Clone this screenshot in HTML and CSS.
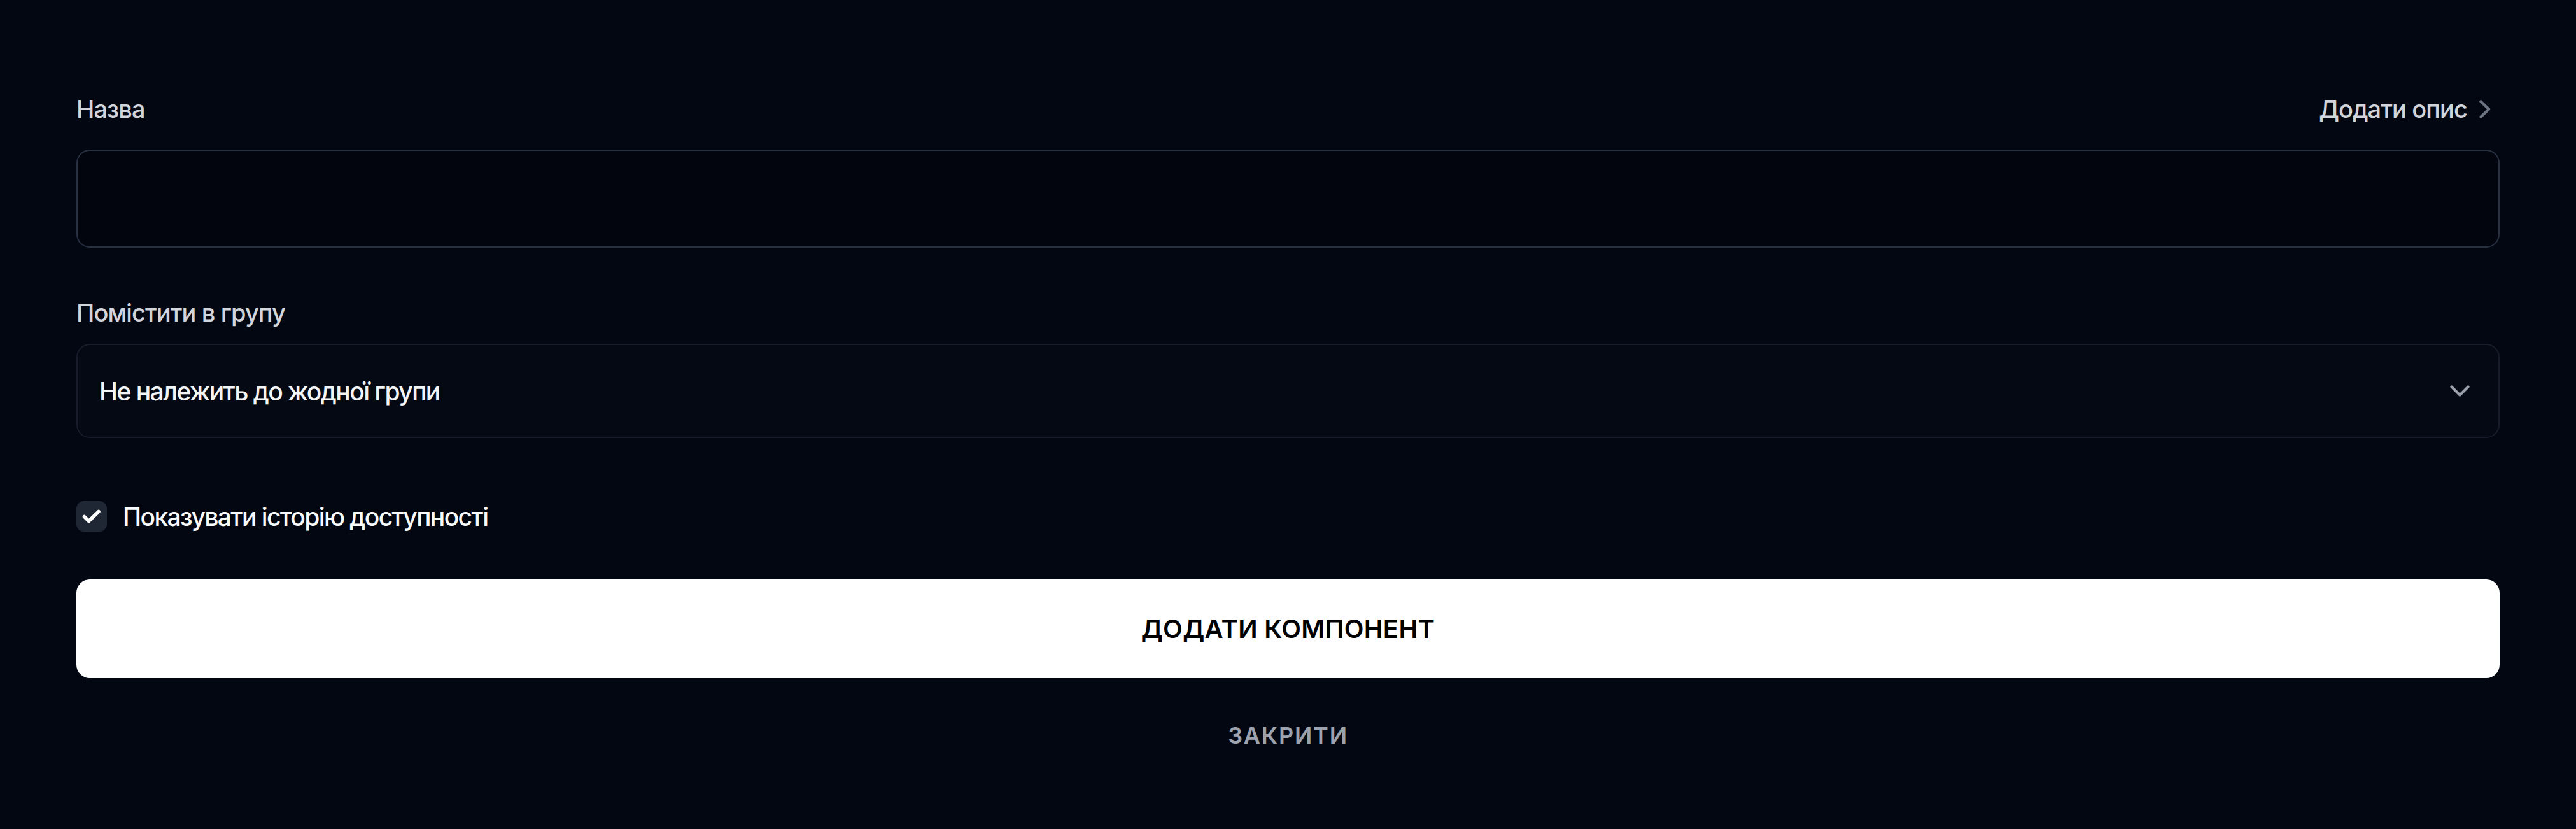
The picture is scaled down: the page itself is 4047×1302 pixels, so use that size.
FILE: index.html
```html
<!DOCTYPE html>
<html lang="uk">
<head>
<meta charset="utf-8">
<title>Додати компонент</title>
<link rel="stylesheet" href="styles.css">
</head>
<body>
<form class="form">
  <div class="field-head">
    <label class="label" for="name">Назва</label>
    <button type="button" class="link-btn">Додати опис
      <svg class="chev-right" width="18" height="29" viewBox="0 0 18 29" aria-hidden="true"><path d="M2.5 2.5 L15 14.5 L2.5 26.5" fill="none" stroke="#6b7280" stroke-width="4.5" stroke-linecap="round" stroke-linejoin="round"/></svg>
    </button>
  </div>
  <div class="input" id="name"></div>

  <div class="label label-group">Помістити в групу</div>
  <div class="select">
    <span class="select-text">Не належить до жодної групи</span>
    <svg class="chev-down" width="31" height="18" viewBox="0 0 31 18" aria-hidden="true"><path d="M2.5 2.5 L15.5 15.5 L28.5 2.5" fill="none" stroke="#9ca3af" stroke-width="4.2" stroke-linecap="round" stroke-linejoin="round"/></svg>
  </div>

  <div class="check-row">
    <span class="checkbox">
      <svg width="48" height="48" viewBox="0 0 48 48" aria-hidden="true"><path d="M12.5 24.5 L19.5 31.5 L35 16.5" fill="none" stroke="#ffffff" stroke-width="5.5" stroke-linecap="round" stroke-linejoin="round"/></svg>
    </span>
    <span class="check-label">Показувати історію доступності</span>
  </div>

  <button type="button" class="primary">ДОДАТИ КОМПОНЕНТ</button>
  <button type="button" class="secondary">ЗАКРИТИ</button>
</form>
</body>
</html>
```
FILE: styles.css
```css
html, body {
  margin: 0;
  padding: 0;
  background: #030712;
}
body {
  font-family: Inter, "Noto Sans", sans-serif;
  color: #f3f4f6;
}
.form {
  display: flex;
  flex-direction: column;
  padding: 145px 120px 0;
}
.field-head {
  display: flex;
  justify-content: space-between;
  align-items: center;
  height: 53px;
}
.label {
  font-size: 38px;
  font-weight: 500;
  color: #d1d5db;
  line-height: 53px;
  letter-spacing: -0.024em;
}
.link-btn {
  display: flex;
  align-items: center;
  gap: 19px;
  background: none;
  border: 0;
  padding: 0 14px 0 0;
  font-family: inherit;
  font-size: 38px;
  font-weight: 500;
  color: #d1d5db;
  line-height: 53px;
  letter-spacing: -0.024em;
}
.input {
  margin-top: 37px;
  height: 150px;
  border: 2px solid #283142;
  border-radius: 21px;
  background: #02050e;
}
.label-group {
  margin-top: 76px;
}
.select {
  margin-top: 22px;
  height: 144px;
  border: 2px solid #161c29;
  border-radius: 21px;
  background: #050913;
  display: flex;
  align-items: center;
  justify-content: space-between;
  padding: 0 45px 0 34px;
}
.select-text {
  font-size: 39px;
  font-weight: 500;
  color: #f3f4f6;
  letter-spacing: -0.04em;
}
.check-row {
  margin-top: 99px;
  display: flex;
  align-items: center;
  gap: 25px;
}
.checkbox {
  width: 48px;
  height: 48px;
  border-radius: 12px;
  background: #1f2735;
  display: flex;
}
.check-label {
  font-size: 39px;
  font-weight: 500;
  color: #f9fafb;
  letter-spacing: -0.041em;
}
.primary {
  margin-top: 75px;
  height: 155px;
  border: 0;
  border-radius: 21px;
  background: #ffffff;
  color: #000000;
  font-family: inherit;
  font-size: 40px;
  font-weight: 600;
  letter-spacing: 0.008em;
}
.secondary {
  margin-top: 65px;
  align-self: center;
  background: none;
  border: 0;
  padding: 0;
  font-family: inherit;
  font-size: 36px;
  font-weight: 600;
  letter-spacing: 0.05em;
  color: #9ca3af;
  line-height: 50px;
}
```
